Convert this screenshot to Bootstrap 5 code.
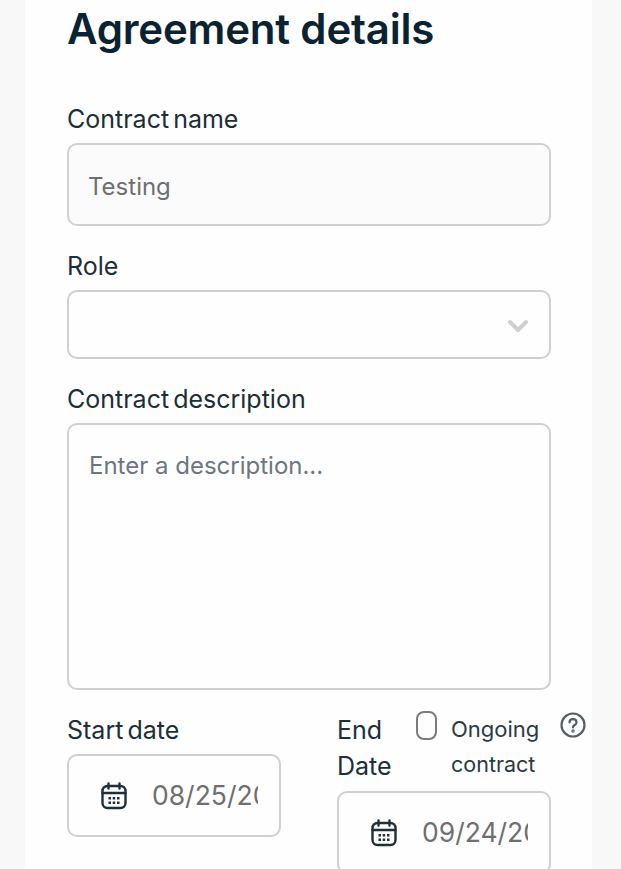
<!DOCTYPE html>
<html lang="en">
<head>
  <meta charset="UTF-8">
  <title>Agreement details</title>
  <link href="https://cdn.jsdelivr.net/npm/bootstrap@5.3.0/dist/css/bootstrap.min.css" rel="stylesheet">
  <style>
    html, body {
      height: 869px;
      overflow: hidden;
    }
    body {
      background: #f8f8f8;
      font-family: "Inter", "Noto Sans", sans-serif;
      color: #14262f;
    }
    .sheet {
      margin-left: 25px;
      width: 567px;
      height: 869px;
      background: #fefefe;
      padding: 4px 41px 0 42px;
    }
    .sheet-title {
      font-size: 42px;
      line-height: 50px;
      font-weight: 600;
      color: #0b2330;
      margin: 0;
      letter-spacing: -0.2px;
    }
    .field-label {
      display: block;
      font-size: 25px;
      line-height: 30px;
      margin: 25px 0 9px;
      word-spacing: -3px;
      color: #1c2e36;
    }
    .label-first {
      margin-top: 50px;
    }
    .field-box {
      border: 2px solid #d0d0d0;
      border-radius: 10px;
      font-size: 24px;
      color: #6f6f6f;
      background-color: #fefefe;
      box-shadow: none;
    }
    .field-box::placeholder {
      color: #6c7680;
      opacity: 1;
    }
    .name-box {
      height: 83px;
      padding: 3px 19px 0;
      background-color: #fbfbfb;
    }
    .role-box {
      height: 69px;
    }
    .role-chevron {
      width: 22px;
      height: 14px;
      margin-right: 20px;
      margin-top: 3px;
    }
    .desc-box {
      height: 267px;
      padding: 23px 20px;
      resize: none;
    }
    .date-row {
      margin-top: 25px;
    }
    .date-box {
      height: 83px;
      padding-left: 31px;
    }
    .date-text {
      border: 0;
      outline: 0;
      background: transparent;
      padding: 0;
      width: 106px;
      margin-left: 24px;
      font-size: 26.500px;
      color: #6f6f6f;
    }
    .cal-icon {
      width: 28px;
      height: 28px;
      flex: none;
    }
    .start-col,
    .end-col {
      width: 214px;
      flex: none;
    }
    .start-col .field-label {
      margin-top: 0;
    }
    .end-col {
      margin-left: 56px;
    }
    .end-top {
      width: 270px;
      height: 79px;
      margin-top: -3px;
    }
    .end-label {
      width: 79px;
      line-height: 36px;
      margin: 0;
      flex: none;
    }
    .ongoing-box {
      width: 21px;
      height: 29px;
      border: 2px solid #7b7b7b;
      border-radius: 8px;
      flex: none;
      margin-top: -1px;
    }
    .ongoing-text {
      font-size: 22px;
      line-height: 35px;
      color: #2a3a42;
      width: 88px;
      flex: none;
      margin-left: 14px;
    }
    .ongoing-text span {
      display: block;
    }
    .ongoing-text .second-line {
      font-size: 21.500px;
    }
    .help-icon {
      width: 26px;
      height: 26px;
      flex: none;
      margin-left: 21px;
    }
  </style>
</head>
<body>

<div class="sheet">
  <h1 class="sheet-title">Agreement details</h1>

  <label class="field-label label-first">Contract name</label>
  <input class="form-control field-box name-box" value="Testing">

  <label class="field-label">Role</label>
  <div class="field-box role-box d-flex align-items-center justify-content-end">
    <svg class="role-chevron" viewBox="0 0 22 14" fill="none" stroke="#cfcfcf" stroke-width="4" stroke-linecap="round" stroke-linejoin="round"><path d="M3 3l8 8 8-8"/></svg>
  </div>

  <label class="field-label">Contract description</label>
  <textarea class="form-control field-box desc-box" placeholder="Enter a description..."></textarea>

  <div class="d-flex date-row">
    <div class="start-col">
      <label class="field-label">Start date</label>
      <div class="field-box date-box d-flex align-items-center">
        <svg class="cal-icon" viewBox="0 0 27 28" fill="none" stroke="#1d2f38" stroke-width="2.400" stroke-linecap="round"><rect x="2" y="4" width="23" height="22" rx="5"/><path d="M2 11h23M8 1.500v5M19 1.500v5"/><g fill="#1d2f38" stroke="none"><rect x="8" y="15" width="2.500" height="2.500"/><rect x="12.200" y="15" width="2.500" height="2.500"/><rect x="16.500" y="15" width="2.500" height="2.500"/><rect x="8" y="19.500" width="2.500" height="2.500"/><rect x="12.200" y="19.500" width="2.500" height="2.500"/><rect x="16.500" y="19.500" width="2.500" height="2.500"/></g></svg>
        <input class="date-text" value="08/25/2024">
      </div>
    </div>
    <div class="end-col">
      <div class="d-flex end-top">
        <label class="field-label end-label">End Date</label>
        <span class="ongoing-box"></span>
        <div class="ongoing-text"><span>Ongoing</span><span class="second-line">contract</span></div>
        <svg class="help-icon" viewBox="0 0 26 26" fill="none" stroke="#555f66" stroke-width="2.200" stroke-linecap="round"><circle cx="13" cy="13" r="11.500"/><path d="M9.500 10.500c0-2 1.600-3.300 3.500-3.300s3.500 1.300 3.500 3.200c0 2.600-3.500 2.600-3.500 5"/><circle cx="13" cy="19" r="0.600"/></svg>
      </div>
      <div class="field-box date-box d-flex align-items-center">
        <svg class="cal-icon" viewBox="0 0 27 28" fill="none" stroke="#1d2f38" stroke-width="2.400" stroke-linecap="round"><rect x="2" y="4" width="23" height="22" rx="5"/><path d="M2 11h23M8 1.500v5M19 1.500v5"/><g fill="#1d2f38" stroke="none"><rect x="8" y="15" width="2.500" height="2.500"/><rect x="12.200" y="15" width="2.500" height="2.500"/><rect x="16.500" y="15" width="2.500" height="2.500"/><rect x="8" y="19.500" width="2.500" height="2.500"/><rect x="12.200" y="19.500" width="2.500" height="2.500"/><rect x="16.500" y="19.500" width="2.500" height="2.500"/></g></svg>
        <input class="date-text" value="09/24/2024">
      </div>
    </div>
  </div>
</div>

<script src="https://cdn.jsdelivr.net/npm/bootstrap@5.3.0/dist/js/bootstrap.bundle.min.js"></script>
</body>
</html>
